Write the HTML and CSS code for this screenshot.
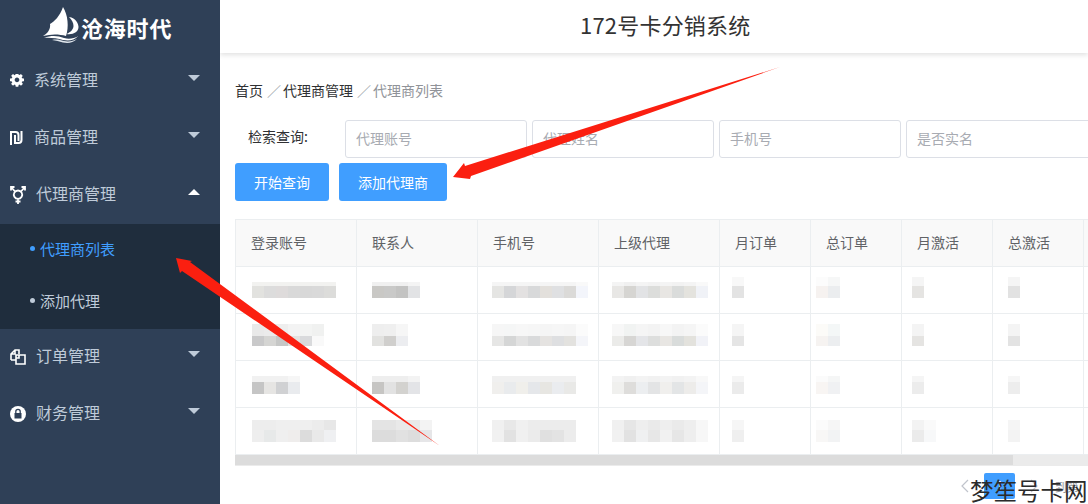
FILE: index.html
```html
<!DOCTYPE html>
<html lang="zh-CN">
<head>
    <meta charset="UTF-8">
    <title>172号卡分销系统</title>
    <link rel="stylesheet" href="styles.css">
</head>
<body>
    <div class="layout">
        <aside class="side">
            <div class="logo">
                <svg width="36" height="36" viewBox="0 0 36 36">
                    <path d="M20 0C17 9 11 15 7 17C8 22 4 27 0 29C8 27 16 27 23 29C26 20 25 8 20 0Z" fill="#fff"/>
                    <path d="M26 10C33 11 35.500 17 35.500 20C35.500 25 30 28 23.500 27C28 25 30.500 22 30.500 19C30.500 16 29 13 26 10Z" fill="#fff"/>
                    <path d="M1 31C9 28 15 29 21 31C26 32.500 31 31.500 35.500 29C31 33.500 26 34 20 33C14 31.500 8 30.500 1 31Z" fill="#fff"/>
                    <path d="M9 33C14 32 17 33 21 34C26 35 30 34 34 32C30 36 25 36.500 20 35.500C16 34.500 13 33.500 9 33Z" fill="#dfe5ec"/>
                </svg>
                <span>沧海时代</span>
            </div>
            <ul class="menu">
                <li class="menu-item">
                    <svg class="ico" width="14" height="14" viewBox="0 0 1536 1536"><path fill="#fff" d="M1024 640q0-106-75-181t-181-75-181 75-75 181 75 181 181 75 181-75 75-181zm512-109v222q0 12-8 23t-20 13l-185 28q-19 54-39 91 35 50 107 138 10 12 10 25t-9 23q-27 37-99 108t-94 71q-12 0-26-9l-138-108q-44 23-91 38-16 136-29 186-7 28-36 28h-222q-14 0-24.5-8.5t-11.5-21.5l-28-184q-49-16-90-37l-141 107q-10 9-25 9-14 0-25-11-126-114-165-168-7-10-7-23 0-12 8-23 15-21 51-66.5t54-70.5q-27-50-41-99l-183-27q-13-2-21-12.5t-8-23.5v-222q0-12 8-23t19-13l186-28q14-46 39-92-40-57-107-138-10-12-10-24 0-10 9-23 26-36 98.5-107.5t94.5-71.5q13 0 26 10l138 107q44-23 91-38 16-136 29-186 7-28 36-28h222q14 0 24.5 8.5t11.5 21.5l28 184q49 16 90 37l142-107q9-9 24-9 13 0 25 10 129 119 165 170 7 8 7 22 0 12-8 23-15 21-51 66.5t-54 70.5q26 50 41 98l183 28q13 2 21 12.5t8 23.5z"/></svg>
                    <span class="txt">系统管理</span><i class="caret"></i>
                </li>
                <li class="menu-item">
                    <svg class="ico" width="14" height="14" viewBox="0 0 14 14"><path fill="none" stroke="#fff" stroke-width="2" d="M1 14V1h4.5a3 3 0 0 1 3 3v6M5 4v8h3.500a3 3 0 0 0 3-3V0"/></svg>
                    <span class="txt">商品管理</span><i class="caret"></i>
                </li>
                <li class="menu-item">
                    <svg class="ico wide" width="16" height="18" viewBox="0 0 16 18"><path fill="none" stroke="#fff" stroke-width="1.800" d="M8 4.500a4.200 4.200 0 1 0 .01 0M5 5.500L1.500 1.500M11 5.500l3.500-4M1 4.500V1h3.500M11.500 1H15v3.500M8 13v5M5.500 15.500h5"/></svg>
                    <span class="txt">代理商管理</span><i class="caret up"></i>
                </li>
                <li class="sub-menu">
                    <div class="sub-item active"><i class="dot"></i>代理商列表</div>
                    <div class="sub-item"><i class="dot"></i>添加代理</div>
                </li>
                <li class="menu-item">
                    <svg class="ico wide" width="16" height="16" viewBox="0 0 16 16"><path fill="none" stroke="#fff" stroke-width="1.600" d="M1 11V5l4-4h4v4M5 1v4H1M1 11h5M6 6h9v9H6zM9 6v3H6"/></svg>
                    <span class="txt">订单管理</span><i class="caret"></i>
                </li>
                <li class="menu-item">
                    <svg class="ico wide" width="16" height="16" viewBox="0 0 16 16"><circle cx="8" cy="8" r="8" fill="#fff"/><rect x="4.500" y="7" width="7" height="5.500" fill="#2f4057"/><path d="M5.800 7V5.500a2.200 2.200 0 0 1 4.400 0V7" fill="none" stroke="#2f4057" stroke-width="1.300"/></svg>
                    <span class="txt">财务管理</span><i class="caret"></i>
                </li>
            </ul>
        </aside>

        <div class="main">
            <header class="top"><h1>172号卡分销系统</h1></header>
            <div class="content">
                <div class="crumb">
                    <span>首页</span><em>／</em><span>代理商管理</span><em>／</em><span class="now">代理商列表</span>
                </div>
                <div class="search">
                    <label>检索查询:</label>
                    <input type="text" placeholder="代理账号">
                    <input type="text" placeholder="代理姓名">
                    <input type="text" placeholder="手机号">
                    <input type="text" placeholder="是否实名">
                </div>
                <div class="btn-group">
                    <button class="btn">开始查询</button>
                    <button class="btn">添加代理商</button>
                </div>
                <table class="grid">
                    <thead>
                        <tr>
                            <th>登录账号</th><th>联系人</th><th>手机号</th><th>上级代理</th>
                            <th>月订单</th><th>总订单</th><th>月激活</th><th>总激活</th><th></th>
                        </tr>
                    </thead>
                    <tbody id="rows"></tbody>
                </table>
                <div class="scroll"><div class="thumb"></div></div>
                <div class="pager">
                    <svg width="8" height="14" viewBox="0 0 8 14"><path d="M7 1L1 7l6 6" fill="none" stroke="#c0c4cc" stroke-width="1.200"/></svg>
                    <span class="page-on">1</span>
                    <svg width="8" height="14" viewBox="0 0 8 14"><path d="M1 1l6 6-6 6" fill="none" stroke="#c0c4cc" stroke-width="1.200"/></svg>
                    <span class="goto">到第</span>
                </div>
            </div>
        </div>
    </div>

    <svg class="arrows" width="1088" height="504" viewBox="0 0 1088 504">
        <polygon points="453,177 464,163 465,166 780,67 471,176 470,179" fill="#fb1f10"/>
        <polygon points="176,258 192,261 190,262 440,446 182,271 180,273" fill="#fb1f10"/>
    </svg>
    <div class="mark">梦笙号卡网</div>

    <script>
        // 打码的色块: [上排高度, 上排颜色, 下排颜色]
        const rows = [
            [
                [4, "f2f2f0 f2f2f0 f2f2f0 f2f2f0 f2f2f0 f2f2f0 f2f2f0", "e2e2df dcdcdc dedbdb d9d9d9 d8d8d8 d9d9d9 dcdcda"],
                [4, "f0f0f0 f0f0f0 f0f0f0 f4f4f4", "c9c8c5 c9c9c8 c3c3c2 e2e3e5"],
                [4, "f5f5f5 f5f5f5 f5f5f5 f5f5f5 f5f5f5 f5f5f5 f5f5f5 f9f9f9", "e5e5e3 d5d6d8 e3e1e1 d8d9da e3e0dc dfe0e2 dbdad8 f3f5fb"],
                [4, "f4f4f4 f0f0f0 f4f4f4 f2f2f2 f4f4f4 f2f2f2 f4f4f4 f9f9f9", "e8e7e5 d6d5d2 e2e3e5 dcdddb e8e6e3 dadcdb e4e3de f0f2f7"],
                [9, "f8f8f8", "e3e3e3"],
                [9, "fcfcfc f6f7f7", "f6f2f0 ebedef"],
                [9, "f5f5f5", "e5e4e2"],
                [9, "f5f5f5", "e2e2e2"]
            ],
            [
                [12, "e9e9e9 ebebeb eeeeee f3f3f3 f3f4f3 f0f1f0", "c9c9ca d5d5d3 c6c7c6 e3e2e0 d9dadc f9f9f9"],
                [12, "eeeeee efefef f6f6f6", "e2e2e0 d0cfcd ecedf0"],
                [12, "f6f6f6 f5f6f6 f7f7f7 f6f6f6 f5f5f5 f6f6f6 f5f5f5 fbfbfb", "e6e6e5 d5d6d6 e2e2e2 d9dadb e5e3e1 dedfe1 e3e2df f4f5f9"],
                [12, "f7f7f7 f1f3f2 f5f5f5 f3f3f3 f7f7f7 f3f3f3 f5f5f5 fbfbfb", "ebebe9 d7d6d4 e4e5e8 dddedd e8e6e3 d9dcdb e3e2dd f1f2f7"],
                [12, "f5f5f5", "e5e5e5"],
                [12, "fcfbf8 f4f7f7", "f6f3f1 eceef0"],
                [12, "f4f4f4", "e5e4e2"],
                [12, "f4f4f4", "e3e3e3"]
            ],
            [
                [6, "f1f1f1 f1f1f1 f1f1f1 f6f6f6", "c5c5c5 e6e5e3 d0d1d3 e9ebee"],
                [6, "eeeeee eeeeee eeeeee f3f3f3", "c6c5c3 e2e2e2 d3d2cf e3e4e7"],
                [6, "f0f0f0 f0f0f0 f0f0f0 f0f0f0 f0f0f0 f0f0f0 f0f0f0", "f0efed e9ebed f0efeb e5e7ea e7e6e2 eaecef e9e9e7"],
                [6, "f3f3f3 f0f0f0 f3f3f3 f1f1f1 f3f3f3 f1f1f1 f3f3f3 f8f8f8", "f0f0ee dedddb eceef0 e3e4e5 f0efed e3e5e6 edecea f4f5f8"],
                [6, "f5f5f5", "ebebeb"],
                [6, "fbfbfb f5f6f6", "f8f5f3 f0f1f3"],
                [6, "f5f5f5", "ececec"],
                [6, "f6f6f6", "ededed"]
            ],
            [
                [10, "ededed ededed efefef efefef efefef ececec e7e7e7", "eeeeee e7e9e9 efefef efedec dcdcdc e9e9e9 eff0f2"],
                [10, "e4e4e4 e4e4e4 e9e9e9 e9e9e9 f3f3f3", "dcdcdc dcdcdc e1e1e1 dddddd e6e6e8"],
                [10, "f0f0f0 e8e8e8 f0f0f0 ececec ececec ececec ececec", "f1f1f1 e2e2e2 f0f0f0 ebebeb e0e0e0 e3e3e3 ececec"],
                [10, "f0f0f0 e6e6e6 eeeeee eaeaea eeeeee eaeaea eeeeee f7f7f7", "f1f1f1 e2e2e2 eff0f1 e7e7e7 f1f1f1 e6e6e6 eeeeee f7f7f7"],
                [10, "f6f6f6", "efefef"],
                [10, "fbfbfb f6f6f6", "f8f7f6 f2f3f4"],
                [10, "f3f3f3 fafafa", "ebebeb f7f8f9"],
                [10, "f5f5f5", "f3f3f3"]
            ]
        ];

        function makeTiles(colors, height) {
            let line = document.createElement("div");
            line.classList.add("tiles");
            if (height) line.style.height = height + "px";
            colors.split(" ").forEach(c => {
                let s = document.createElement("span");
                s.style.backgroundColor = "#" + c;
                line.appendChild(s);
            });
            return line;
        }

        const tbody = document.querySelector("#rows");
        rows.forEach((row, i) => {
            let tr = document.createElement("tr");
            tr.classList.add("row" + (i + 1));
            row.forEach(cell => {
                let td = document.createElement("td");
                td.appendChild(makeTiles(cell[1], cell[0]));
                td.appendChild(makeTiles(cell[2]));
                tr.appendChild(td);
            });
            tr.appendChild(document.createElement("td"));
            tbody.appendChild(tr);
        });
    </script>
</body>
</html>
```

FILE: styles.css
```css
* {
    box-sizing: border-box;
}
html, body {
    margin: 0;
    height: 100%;
    overflow: hidden;
    font-family: "Noto Sans CJK SC", "Liberation Sans", sans-serif;
    background: #fff;
}
.layout {
    display: flex;
    height: 504px;
}

/* 左侧菜单 */
.side {
    width: 220px;
    flex-shrink: 0;
    background-color: #2f4057;
}
.logo {
    height: 53px;
    padding: 7px 0 0 43px;
    display: flex;
    color: #fff;
}
.logo span {
    font-size: 22px;
    font-weight: 700;
    line-height: 40px;
    margin-left: 2px;
    letter-spacing: 0.8px;
}
.menu {
    list-style: none;
    margin: 0;
    padding: 0;
}
.menu-item {
    height: 57px;
    padding: 0 0 2px 10px;
    display: flex;
    align-items: center;
    color: #bfcbd9;
    font-size: 16px;
}
.ico {
    flex-shrink: 0;
    margin-right: 10px;
}
.ico.wide {
    width: 16px;
}
.txt {
    flex: 1;
    margin-bottom: 4px;
}
.caret {
    width: 0;
    height: 0;
    margin: 0 20px 6px 0;
    border-left: 6px solid transparent;
    border-right: 6px solid transparent;
    border-top: 6px solid #bfcbd9;
}
.caret.up {
    border-top: none;
    border-bottom: 6px solid #fff;
}
.sub-menu {
    height: 105px;
    background-color: #1f2d3d;
}
.sub-item {
    height: 52.5px;
    padding: 0 0 4px 30px;
    display: flex;
    align-items: center;
    font-size: 15px;
    color: #bfcbd9;
}
.sub-item .dot {
    width: 5px;
    height: 5px;
    border-radius: 50%;
    margin-right: 5px;
    background-color: #bfcbd9;
}
.sub-item.active {
    color: #409eff;
}
.sub-item.active .dot {
    background-color: #409eff;
}

/* 右侧 */
.main {
    flex: 1;
    min-width: 0;
    overflow: hidden;
}
.top {
    height: 53px;
    padding: 0 0 6px 360px;
    display: flex;
    align-items: center;
    box-shadow: 0 2px 5px rgba(0, 0, 0, 0.12);
}
.top h1 {
    margin: 0;
    font-size: 22px;
    font-weight: 400;
    letter-spacing: 0.2px;
    color: #333;
    white-space: nowrap;
}
.content {
    padding: 27px 0 0 15px;
}
.crumb {
    height: 20px;
    display: flex;
    align-items: center;
    font-size: 14px;
    color: #303133;
}
.crumb em {
    width: 16px;
    margin-left: 4px;
    font-style: normal;
    color: #a0a4ab;
}
.crumb .now {
    color: #909399;
}
.search {
    margin-top: 20px;
    height: 38px;
    display: flex;
    width: 900px;
}
.search label {
    width: 110px;
    padding-left: 13px;
    line-height: 33px;
    font-size: 14px;
    color: #303133;
    flex-shrink: 0;
}
.search input {
    width: 182px;
    height: 38px;
    margin-right: 5px;
    padding: 0 10px 2px;
    flex-shrink: 0;
    border: 1px solid #dcdfe6;
    border-radius: 3px;
    outline: none;
    font: inherit;
    font-size: 14px;
}
.search input:last-child {
    width: 200px;
}
.search input::placeholder {
    color: #a8abb2;
}
.btn-group {
    margin-top: 5px;
    display: flex;
    gap: 10px;
}
.btn {
    height: 38px;
    padding: 0 19px;
    border: none;
    border-radius: 3px;
    background-color: #409eff;
    color: #fff;
    font: inherit;
    font-size: 14px;
}

/* 表格 */
.grid {
    margin-top: 18px;
    width: 879px;
    table-layout: fixed;
    border-collapse: collapse;
}
.grid th, .grid td {
    height: 47px;
    padding: 0;
    border: 1px solid #ebeef0;
    overflow: hidden;
}
.grid th {
    padding: 0 0 2px 15px;
    background-color: #f9f9f9;
    font-size: 14px;
    font-weight: 400;
    color: #606266;
    text-align: left;
}
.grid th:nth-child(-n+4) {
    width: 121px;
}
.grid th:nth-child(n+5) {
    width: 91px;
}
.grid td {
    vertical-align: bottom;
}
.grid td:nth-child(1) { padding-left: 16px; }
.grid td:nth-child(2) { padding-left: 15px; }
.grid td:nth-child(3) { padding-left: 14px; }
.grid td:nth-child(4) { padding-left: 13px; }
.grid td:nth-child(5) { padding-left: 12px; }
.grid td:nth-child(6) { padding-left: 5px; }
.grid td:nth-child(7) { padding-left: 10px; }
.grid td:nth-child(8) { padding-left: 15px; }
.row1 td { padding-bottom: 15px; }
.row2 td { padding-bottom: 14px; }
.row3 td { padding-bottom: 13px; }
.row4 td { padding-bottom: 12px; }
.tiles {
    display: flex;
    height: 12px;
}
.row2 .tiles:last-child {
    height: 10px;
}
.tiles span {
    width: 12px;
    flex-shrink: 0;
}
.scroll {
    width: 900px;
    height: 11px;
    background-color: #ebebeb;
}
.thumb {
    width: 778px;
    height: 10px;
    background-color: #dcdcdc;
}
.pager {
    margin: 7px 0 0 726px;
    width: 200px;
    height: 26px;
    display: flex;
    align-items: center;
}
.page-on {
    width: 31px;
    height: 26px;
    margin: 0 15px;
    border-radius: 2px;
    background-color: #409eff;
    color: #fff;
    font-size: 13px;
    line-height: 26px;
    text-align: center;
}
.goto {
    margin-left: 17px;
    font-size: 12px;
    color: #909399;
}

/* 覆盖在截图上的标注 */
.arrows {
    position: absolute;
    left: 0;
    top: 0;
    pointer-events: none;
}
.mark {
    position: absolute;
    left: 970px;
    top: 475px;
    font-size: 23.500px;
    line-height: 30px;
    color: #2b2b2b;
    white-space: nowrap;
}
```
